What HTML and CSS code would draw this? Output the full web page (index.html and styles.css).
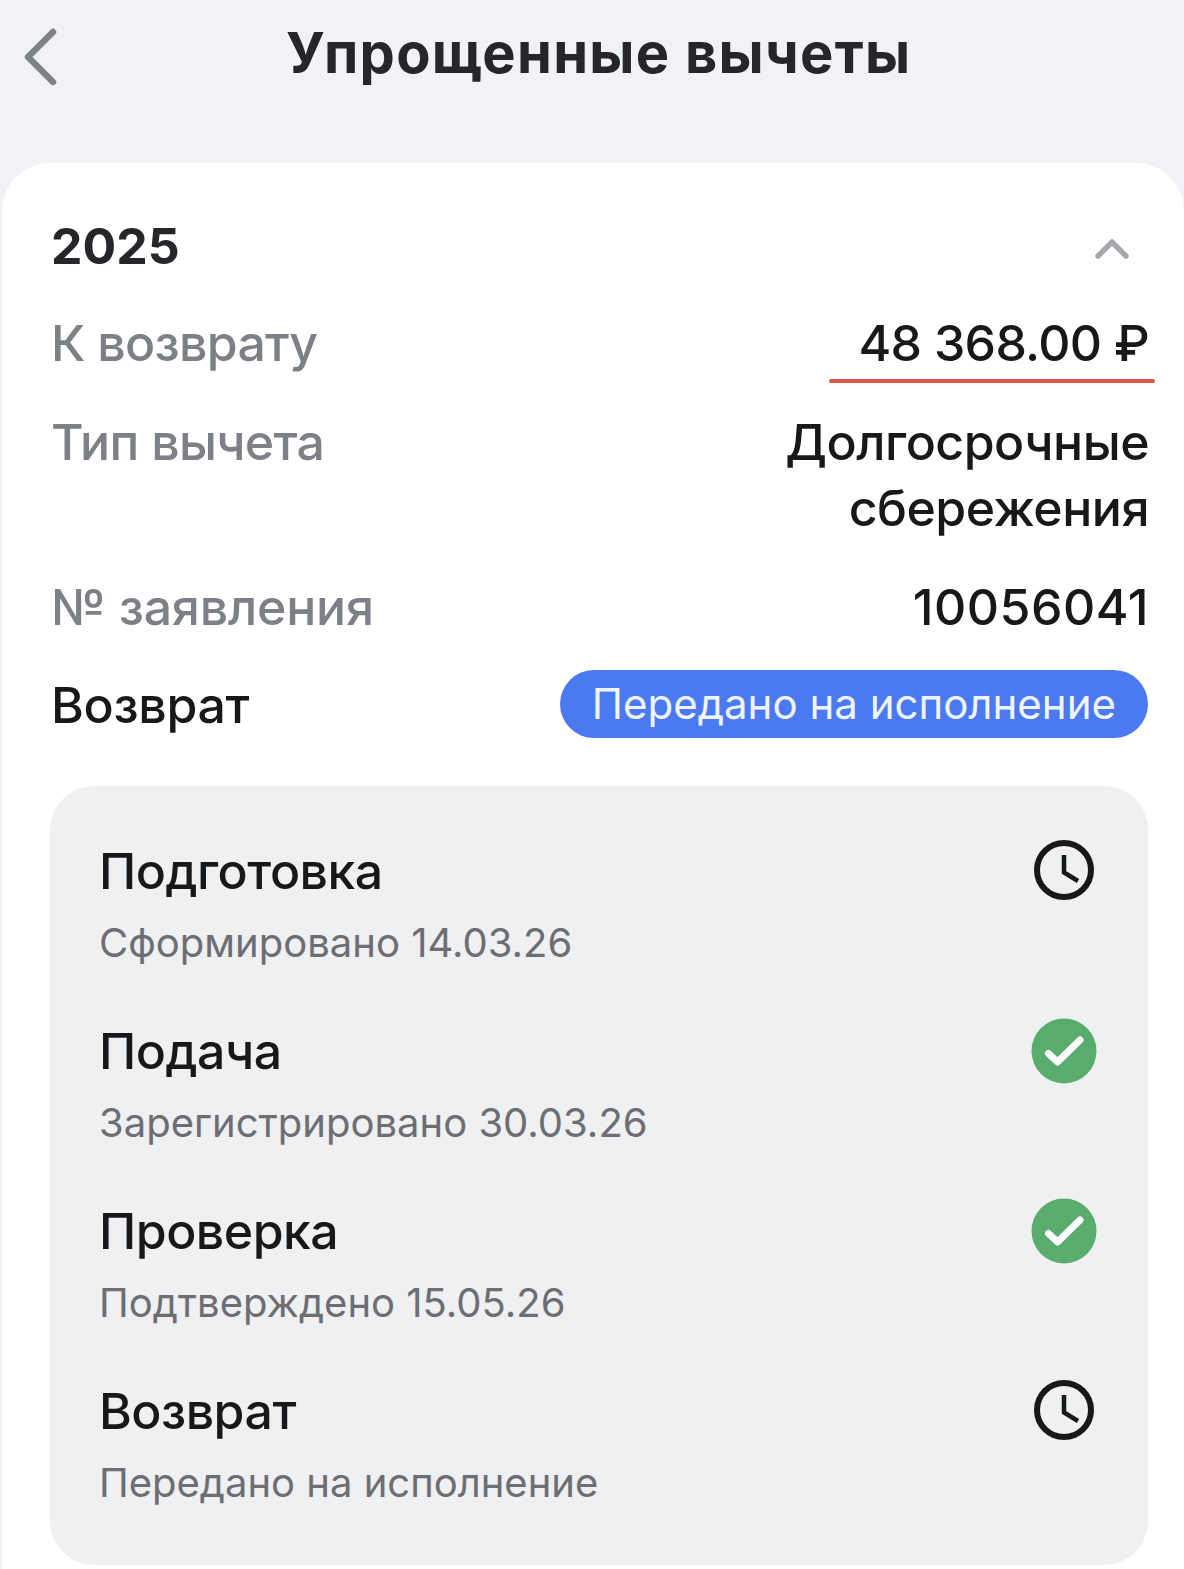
FILE: index.html
```html
<!DOCTYPE html>
<html lang="ru">
<head>
    <meta charset="UTF-8">
    <meta name="viewport" content="width=device-width, initial-scale=1.0">
    <title>Упрощенные вычеты</title>
    <link rel="stylesheet" href="styles.css">
</head>
<body>
    <header class="topbar">
        <svg class="back-icon" width="36" height="58" viewBox="0 0 36 58">
            <path d="M31 4 L6 29 L31 54" fill="none" stroke="#7f8288" stroke-width="6.5" stroke-linecap="round" stroke-linejoin="round"/>
        </svg>
        <h1>Упрощенные вычеты</h1>
    </header>

    <main class="card">
        <div class="year-row">
            <span class="year">2025</span>
            <svg class="collapse-icon" width="36" height="22" viewBox="0 0 36 22">
                <path d="M4 19 L18 5 L32 19" fill="none" stroke="#a5a7aa" stroke-width="5.5" stroke-linecap="round" stroke-linejoin="round"/>
            </svg>
        </div>

        <div class="row row-sum">
            <span class="label">К возврату</span>
            <span class="value">48 368.00 ₽</span>
        </div>
        <div class="row row-type">
            <span class="label">Тип вычета</span>
            <span class="value">Долгосрочные<br>сбережения</span>
        </div>
        <div class="row row-number">
            <span class="label label-number">№ заявления</span>
            <span class="value value-number">10056041</span>
        </div>
        <div class="row row-status">
            <span class="label label-dark">Возврат</span>
            <span class="badge">Передано на исполнение</span>
        </div>

        <section class="steps">
            <div class="step">
                <div>
                    <div class="step-title">Подготовка</div>
                    <div class="step-note">Сформировано 14.03.26</div>
                </div>
                <svg class="step-icon" width="66" height="66" viewBox="0 0 66 66">
                    <circle cx="33" cy="32" r="27" fill="none" stroke="#17181a" stroke-width="6"/>
                    <path d="M33 17 V34.5 L47 43" fill="none" stroke="#17181a" stroke-width="4.5"/>
                </svg>
            </div>
            <div class="step">
                <div>
                    <div class="step-title">Подача</div>
                    <div class="step-note">Зарегистрировано 30.03.26</div>
                </div>
                <svg class="step-icon" width="66" height="66" viewBox="0 0 66 66">
                    <circle cx="33" cy="33" r="32.5" fill="#58ad6e"/>
                    <path d="M17.5 35.5 L26.5 44 L49 22" fill="none" stroke="#fff" stroke-width="7" stroke-linecap="round" stroke-linejoin="round"/>
                </svg>
            </div>
            <div class="step">
                <div>
                    <div class="step-title">Проверка</div>
                    <div class="step-note">Подтверждено 15.05.26</div>
                </div>
                <svg class="step-icon" width="66" height="66" viewBox="0 0 66 66">
                    <circle cx="33" cy="33" r="32.5" fill="#58ad6e"/>
                    <path d="M17.5 35.5 L26.5 44 L49 22" fill="none" stroke="#fff" stroke-width="7" stroke-linecap="round" stroke-linejoin="round"/>
                </svg>
            </div>
            <div class="step">
                <div>
                    <div class="step-title">Возврат</div>
                    <div class="step-note">Передано на исполнение</div>
                </div>
                <svg class="step-icon" width="66" height="66" viewBox="0 0 66 66">
                    <circle cx="33" cy="32" r="27" fill="none" stroke="#17181a" stroke-width="6"/>
                    <path d="M33 17 V34.5 L47 43" fill="none" stroke="#17181a" stroke-width="4.5"/>
                </svg>
            </div>
        </section>
    </main>
</body>
</html>
```

FILE: styles.css
```css
html, body {
    margin: 0;
    padding: 0;
}

body {
    width: 1184px;
    height: 1569px;
    overflow: hidden;
    background-color: #f0f2f6;
    font-family: 'Inter', 'Liberation Sans', sans-serif;
    font-weight: 450;
    color: #17181a;
}

.topbar {
    height: 163px;
    box-sizing: border-box;
    padding: 25px 0 0 22px;
    display: flex;
    align-items: flex-start;
}

.back-icon {
    flex: none;
    margin-top: 3px;
}

.topbar h1 {
    margin: -1px 0 0 228px;
    font-size: 56px;
    line-height: 58px;
    letter-spacing: 1.3px;
    font-weight: 700;
    color: #25262a;
    white-space: nowrap;
}

.card {
    margin-left: 2px;
    height: 1406px;
    box-sizing: border-box;
    padding: 50px 36px 0 48px;
    background-color: #fff;
    border-radius: 48px 48px 0 0;
}

.year-row {
    display: flex;
    justify-content: space-between;
    align-items: center;
    height: 66px;
    margin-bottom: 31px;
    padding: 0 18px 0 1px;
}

.collapse-icon {
    margin-top: 3px;
}

.year {
    font-size: 50px;
    font-weight: 700;
    color: #25262a;
}

.row {
    display: flex;
    justify-content: space-between;
    align-items: flex-start;
    padding-left: 1px;
    font-size: 50px;
    line-height: 66px;
}

.row-sum {
    height: 99px;
}

.row-type {
    height: 165px;
}

.row-number {
    height: 98px;
}

.row-status {
    height: 114px;
}

.label {
    color: #7d8087;
    letter-spacing: -0.7px;
}

.label-number {
    letter-spacing: -0.2px;
}

.label-dark {
    color: #17181a;
    letter-spacing: -0.3px;
}

.value {
    margin-right: -1px;
    letter-spacing: -0.5px;
    text-align: right;
}

.value-number {
    letter-spacing: 0.5px;
}

.row-sum .value {
    position: relative;
    letter-spacing: -0.7px;
}

.row-sum .value::after {
    content: "";
    position: absolute;
    left: -29px;
    right: -6px;
    bottom: -7px;
    height: 4px;
    border-radius: 2px;
    background-color: #d9584b;
}

.badge {
    margin-top: -2px;
    height: 68px;
    line-height: 68px;
    padding: 0 32px;
    border-radius: 34px;
    background-color: #4a79f1;
    color: #f0f4fe;
    font-size: 42px;
    font-weight: 400;
    white-space: nowrap;
}

.steps {
    height: 779px;
    box-sizing: border-box;
    padding: 50px 51px 0 49px;
    background-color: #eef0f2;
    border-radius: 44px;
}

.step {
    display: flex;
    justify-content: space-between;
    height: 180px;
}

.step-title {
    font-size: 50px;
    line-height: 70px;
    letter-spacing: -0.5px;
}

.step-note {
    margin-top: 2px;
    font-size: 40px;
    font-weight: 400;
    line-height: 70px;
    color: #6c6e73;
}

.step-icon {
    flex: none;
    margin-top: 2px;
}
```
